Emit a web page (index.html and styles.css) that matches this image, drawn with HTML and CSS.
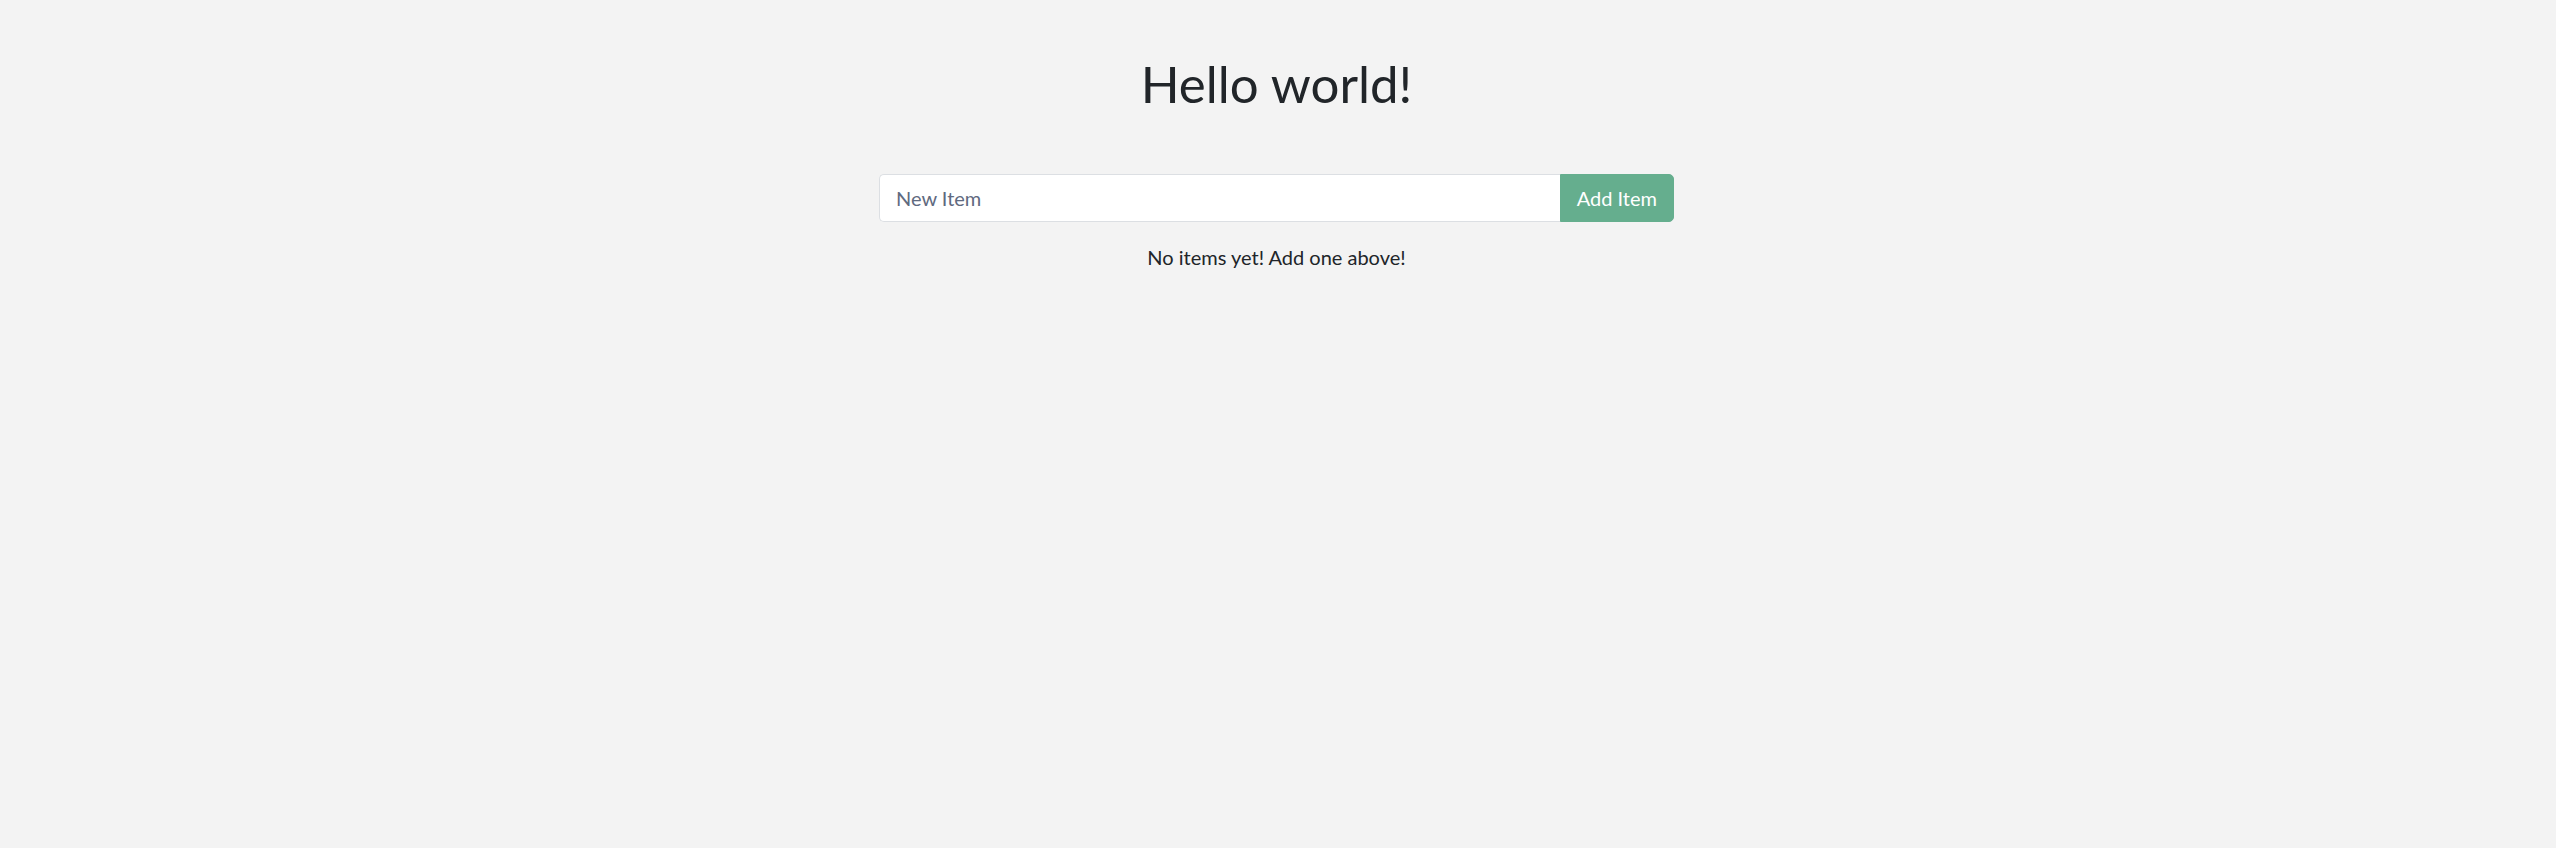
FILE: index.html
```html
<!DOCTYPE html>
<html lang="en">
<head>
<meta charset="utf-8">
<title>Hello world!</title>
<link rel="stylesheet" href="styles.css">
</head>
<body>
<main class="app">
  <h1 class="title">Hello world!</h1>
  <form class="add-form">
    <input class="add-input" type="text" placeholder="New Item">
    <button class="add-btn" type="button">Add Item</button>
  </form>
  <p class="empty">No items yet! Add one above!</p>
</main>
</body>
</html>
```
FILE: styles.css
```css
html, body {
  margin: 0;
  padding: 0;
}
body {
  background: #f3f3f3;
  font-family: Lato, "Open Sans", sans-serif;
  color: #212529;
}
.app {
  display: flex;
  flex-direction: column;
  align-items: center;
  padding-top: 53px;
  padding-right: 3px;
}
.title {
  margin: 0;
  font-size: 51px;
  font-weight: 400;
  line-height: 1.2;
  color: #212529;
}
.add-form {
  display: flex;
  width: 795px;
  margin-top: 60px;
}
.add-input {
  flex: 1;
  min-width: 0;
  height: 48px;
  box-sizing: border-box;
  padding: 8px 16px;
  font-family: inherit;
  font-size: 20px;
  color: #495057;
  background: #fff;
  border: 1px solid #dcdfe3;
  border-right: none;
  border-radius: 5px 0 0 5px;
  outline: none;
}
.add-input::placeholder {
  color: #5f6a80;
}
.add-btn {
  flex: none;
  height: 48px;
  box-sizing: border-box;
  white-space: nowrap;
  font-family: inherit;
  font-size: 20px;
  line-height: 1.5;
  color: #fff;
  background: #65ae8e;
  border: 1px solid #65ae8e;
  border-radius: 0 5px 5px 0;
  padding: 8px 16px;
}
.empty {
  margin: 20px 0 0;
  font-size: 20px;
  line-height: 1.5;
  color: #212529;
}
```
